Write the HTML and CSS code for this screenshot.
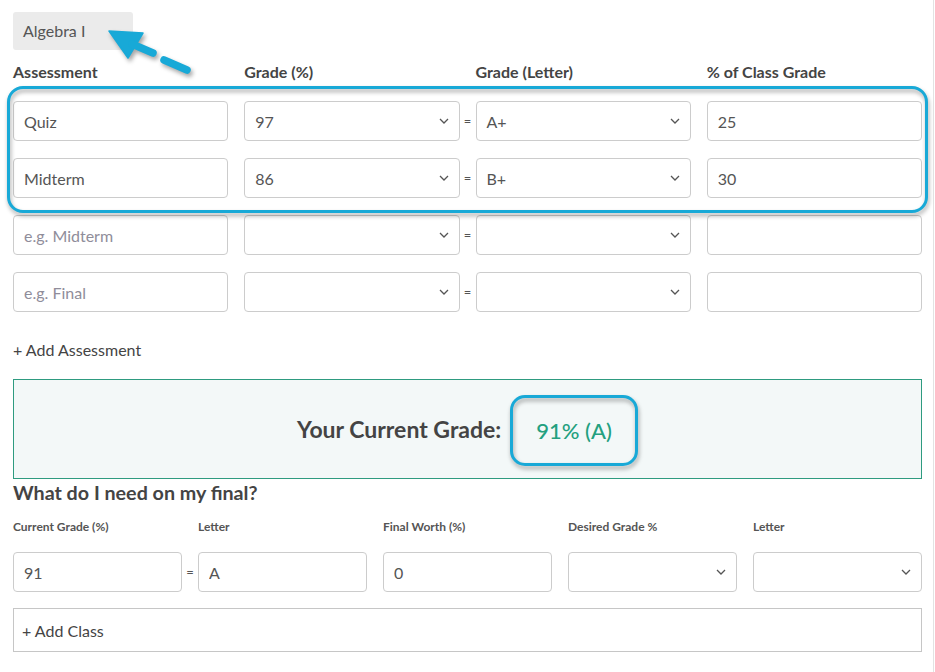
FILE: index.html
```html
<!DOCTYPE html>
<html lang="en">
<head>
<meta charset="utf-8">
<title>Grade Calculator</title>
<link rel="stylesheet" href="styles.css">
</head>
<body>
<div class="page">
  <svg class="annot-arrow" width="100" height="60" viewBox="0 0 100 60" aria-hidden="true">
    <polygon points="9,11 43,13 28,38" fill="#18a9d7" stroke="#18a9d7" stroke-width="1.5" stroke-linejoin="round"/>
    <line x1="32" y1="24" x2="53" y2="33" stroke="#18a9d7" stroke-width="7.5" stroke-linecap="round"/>
    <line x1="64" y1="40" x2="87" y2="50" stroke="#18a9d7" stroke-width="7.5" stroke-linecap="round"/>
  </svg>

  <div class="class-name">Algebra I</div>

  <div class="row head">
    <div class="cell">Assessment</div><div class="sep"></div>
    <div class="cell">Grade (%)</div><div class="sep"></div>
    <div class="cell">Grade (Letter)</div><div class="sep"></div>
    <div class="cell">% of Class Grade</div>
  </div>

  <div class="rows">
    <div class="highlight-group">
      <div class="row">
        <div class="cell"><input class="field" value="Quiz"></div><div class="sep"></div>
        <div class="cell"><div class="field select"><span>97</span><svg width="10" height="6" viewBox="0 0 10 6"><path d="M1 1 L5 5 L9 1" fill="none" stroke="#555" stroke-width="1.3"/></svg></div></div><div class="sep">=</div>
        <div class="cell"><div class="field select"><span>A+</span><svg width="10" height="6" viewBox="0 0 10 6"><path d="M1 1 L5 5 L9 1" fill="none" stroke="#555" stroke-width="1.3"/></svg></div></div><div class="sep"></div>
        <div class="cell"><input class="field" value="25"></div>
      </div>
      <div class="row">
        <div class="cell"><input class="field" value="Midterm"></div><div class="sep"></div>
        <div class="cell"><div class="field select"><span>86</span><svg width="10" height="6" viewBox="0 0 10 6"><path d="M1 1 L5 5 L9 1" fill="none" stroke="#555" stroke-width="1.3"/></svg></div></div><div class="sep">=</div>
        <div class="cell"><div class="field select"><span>B+</span><svg width="10" height="6" viewBox="0 0 10 6"><path d="M1 1 L5 5 L9 1" fill="none" stroke="#555" stroke-width="1.3"/></svg></div></div><div class="sep"></div>
        <div class="cell"><input class="field" value="30"></div>
      </div>
    </div>
    <div class="row">
      <div class="cell"><input class="field" placeholder="e.g. Midterm"></div><div class="sep"></div>
      <div class="cell"><div class="field select"><span></span><svg width="10" height="6" viewBox="0 0 10 6"><path d="M1 1 L5 5 L9 1" fill="none" stroke="#555" stroke-width="1.3"/></svg></div></div><div class="sep">=</div>
      <div class="cell"><div class="field select"><span></span><svg width="10" height="6" viewBox="0 0 10 6"><path d="M1 1 L5 5 L9 1" fill="none" stroke="#555" stroke-width="1.3"/></svg></div></div><div class="sep"></div>
      <div class="cell"><input class="field"></div>
    </div>
    <div class="row">
      <div class="cell"><input class="field" placeholder="e.g. Final"></div><div class="sep"></div>
      <div class="cell"><div class="field select"><span></span><svg width="10" height="6" viewBox="0 0 10 6"><path d="M1 1 L5 5 L9 1" fill="none" stroke="#555" stroke-width="1.3"/></svg></div></div><div class="sep">=</div>
      <div class="cell"><div class="field select"><span></span><svg width="10" height="6" viewBox="0 0 10 6"><path d="M1 1 L5 5 L9 1" fill="none" stroke="#555" stroke-width="1.3"/></svg></div></div><div class="sep"></div>
      <div class="cell"><input class="field"></div>
    </div>
  </div>

  <div class="add-assessment">+ Add Assessment</div>

  <div class="result">
    <span class="result-label">Your Current Grade:</span>
    <span class="result-value">91% (A)</span>
  </div>

  <h2 class="final-title">What do I need on my final?</h2>

  <div class="row small-head">
    <div class="cell">Current Grade (%)</div><div class="sep"></div>
    <div class="cell">Letter</div><div class="sep"></div>
    <div class="cell">Final Worth (%)</div><div class="sep"></div>
    <div class="cell">Desired Grade %</div><div class="sep"></div>
    <div class="cell">Letter</div>
  </div>

  <div class="row final-row">
    <div class="cell"><input class="field" value="91"></div><div class="sep">=</div>
    <div class="cell"><input class="field" value="A"></div><div class="sep"></div>
    <div class="cell"><input class="field" value="0"></div><div class="sep"></div>
    <div class="cell"><div class="field select"><span></span><svg width="10" height="6" viewBox="0 0 10 6"><path d="M1 1 L5 5 L9 1" fill="none" stroke="#555" stroke-width="1.3"/></svg></div></div><div class="sep"></div>
    <div class="cell"><div class="field select"><span></span><svg width="10" height="6" viewBox="0 0 10 6"><path d="M1 1 L5 5 L9 1" fill="none" stroke="#555" stroke-width="1.3"/></svg></div></div>
  </div>

  <div class="add-class">+ Add Class</div>
</div>
</body>
</html>
```

FILE: styles.css
```css
* { box-sizing: border-box; }

body {
  margin: 0;
  background: #fff;
  font-family: Lato, "Noto Sans", sans-serif;
  color: #444;
}

.page {
  position: relative;
  width: 934px;
  min-height: 672px;
  border-right: 1px solid #e3e3e3;
  padding: 12px 11px 0 13px;
}

.annot-arrow {
  position: absolute;
  left: 100px;
  top: 20px;
  filter: drop-shadow(2px 3px 2px rgba(0, 0, 0, 0.35));
  z-index: 2;
}

.class-name {
  width: 120px;
  height: 38px;
  line-height: 38px;
  padding-left: 10px;
  background: #ebebeb;
  border-radius: 3px;
  font-size: 16px;
  color: #555;
}

.row {
  display: flex;
  align-items: center;
}

.cell {
  flex: 1 1 0;
  min-width: 0;
}

.sep {
  flex: none;
  width: 16px;
  text-align: center;
  font-size: 13px;
  color: #555;
}

.head {
  margin-top: 10px;
  line-height: 24px;
  font-size: 16px;
  font-weight: 700;
  color: #444;
}

.rows {
  margin-top: 17px;
  display: flex;
  flex-direction: column;
  gap: 17px;
}

.highlight-group {
  position: relative;
  display: flex;
  flex-direction: column;
  gap: 17px;
}

.highlight-group::before {
  content: "";
  position: absolute;
  left: -6px;
  right: -6px;
  top: -15px;
  bottom: -15px;
  border: 3px solid #18a9d7;
  border-radius: 16px;
  filter: drop-shadow(1px 3px 2px rgba(0, 0, 0, 0.35));
  pointer-events: none;
}

.field {
  display: flex;
  align-items: center;
  width: 100%;
  height: 40px;
  border: 1px solid #ccc;
  border-radius: 4px;
  padding: 0 10px;
  background: #fff;
  font-family: Lato, "Noto Sans", sans-serif;
  font-size: 16px;
  color: #555;
  outline: none;
}

.field::placeholder {
  color: #8f8d9a;
}

.select {
  justify-content: space-between;
}

.select svg {
  flex: none;
}

.add-assessment {
  margin-top: 26px;
  line-height: 24px;
  font-size: 16px;
  color: #444;
}

.result {
  margin-top: 17px;
  height: 100px;
  border: 1px solid #2e9b80;
  background: #f3f8f8;
  display: flex;
  align-items: center;
  justify-content: center;
  gap: 9px;
}

.result-label {
  font-size: 23px;
  font-weight: 700;
  color: #444;
}

.result-value {
  position: relative;
  display: flex;
  align-items: center;
  height: 71px;
  padding: 0 26px;
  margin-top: 3px;
  font-size: 22px;
  font-weight: 500;
  color: #23a07f;
}

.result-value::before {
  content: "";
  position: absolute;
  inset: 0;
  border: 3px solid #18a9d7;
  border-radius: 15px;
  filter: drop-shadow(1px 3px 2px rgba(0, 0, 0, 0.35));
  pointer-events: none;
}

.final-title {
  margin: 1px 0 0;
  font-size: 19.7px;
  line-height: 26px;
  font-weight: 700;
  color: #444;
}

.small-head {
  margin-top: 13px;
  line-height: 16px;
  font-size: 12px;
  font-weight: 700;
  color: #555;
}

.final-row {
  margin-top: 17px;
}

.add-class {
  margin-top: 16px;
  height: 44px;
  border: 1px solid #c6c6c6;
  padding-left: 8px;
  display: flex;
  align-items: center;
  font-size: 16px;
  color: #444;
}
```
